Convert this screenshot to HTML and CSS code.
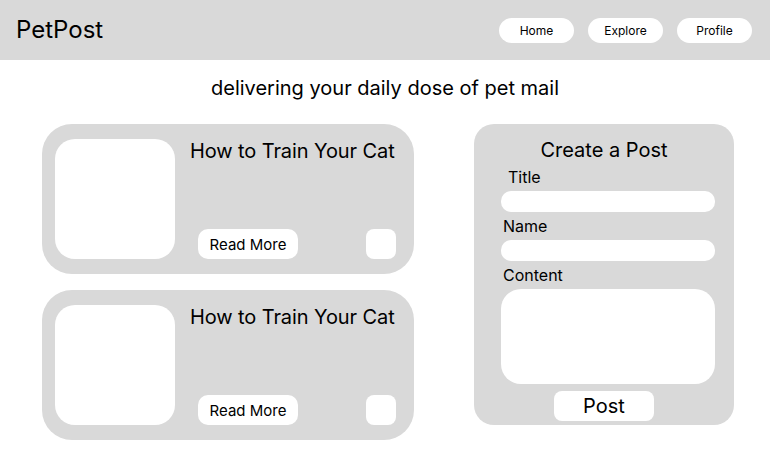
FILE: index.html
```html
<!DOCTYPE html>
<html>
  <head>
    <title>PetPost</title>
    <link rel="stylesheet" href="styles.css">
  </head>
  <body>
    <!-- Barra superior -->
    <header class="topbar">
      <h1 class="logo">PetPost</h1>
      <nav class="nav">
        <button class="nav-btn">Home</button>
        <button class="nav-btn">Explore</button>
        <button class="nav-btn">Profile</button>
      </nav>
    </header>

    <p class="tagline">delivering your daily dose of pet mail</p>

    <main class="content">
      <!-- Lista de posts -->
      <section class="posts">
        <article class="post-card">
          <div class="post-image"></div>
          <div class="post-body">
            <h2 class="post-title">How to Train Your Cat</h2>
            <div class="post-actions">
              <button class="read-more">Read More</button>
              <button class="square-btn"></button>
            </div>
          </div>
        </article>
        <article class="post-card">
          <div class="post-image"></div>
          <div class="post-body">
            <h2 class="post-title">How to Train Your Cat</h2>
            <div class="post-actions">
              <button class="read-more">Read More</button>
              <button class="square-btn"></button>
            </div>
          </div>
        </article>
      </section>

      <!-- Formulario -->
      <form class="create-post">
        <h2 class="form-title">Create a Post</h2>
        <label class="field-label first">Title</label>
        <input class="field" type="text">
        <label class="field-label">Name</label>
        <input class="field" type="text">
        <label class="field-label">Content</label>
        <textarea class="field area"></textarea>
        <button type="submit" class="post-btn">Post</button>
      </form>
    </main>
  </body>
</html>
```

FILE: styles.css
```css
html {
  margin: 0;
  padding: 0;
}
body {
  font-family: Inter, "Noto Sans", sans-serif;
  margin: 0;
  padding: 0;
  color: #000;
  background: #fff;
}

.topbar {
  display: flex;
  align-items: center;
  justify-content: space-between;
  height: 60px;
  padding: 0 18px 0 16px;
  background-color: #d9d9d9;
  box-sizing: border-box;
}

.logo {
  margin: 0;
  font-size: 24px;
  font-weight: 400;
  line-height: 28px;
}

.nav {
  display: flex;
  gap: 14px;
  padding-top: 1px;
}

.nav-btn {
  width: 75px;
  height: 25px;
  border: none;
  border-radius: 13px;
  background-color: #fff;
  font-family: inherit;
  font-size: 12px;
  color: #000;
  padding: 0;
}

.tagline {
  margin: 16px 0 24px;
  text-align: center;
  font-size: 20px;
  line-height: 24px;
}

.content {
  display: flex;
  align-items: flex-start;
  gap: 60px;
  padding-left: 42px;
}

.posts {
  display: flex;
  flex-direction: column;
  gap: 16px;
}

.post-card {
  display: flex;
  width: 372px;
  height: 150px;
  padding: 15px 18px 15px 13px;
  box-sizing: border-box;
  border-radius: 30px;
  background-color: #d9d9d9;
}

.post-image {
  width: 120px;
  height: 120px;
  border-radius: 20px;
  background-color: #fff;
  flex-shrink: 0;
}

.post-body {
  flex: 1;
  display: flex;
  flex-direction: column;
  justify-content: space-between;
  margin-left: 15px;
}

.post-title {
  margin: 0;
  font-size: 20px;
  font-weight: 400;
  line-height: 24px;
  white-space: nowrap;
  letter-spacing: -0.1px;
}

.post-actions {
  display: flex;
  align-items: center;
  padding-left: 8px;
}

.read-more {
  width: 100px;
  height: 30px;
  border: none;
  border-radius: 10px;
  background-color: #fff;
  font-family: inherit;
  font-size: 15px;
  color: #000;
  padding: 0;
}

.square-btn {
  width: 30px;
  height: 30px;
  margin-left: auto;
  border: none;
  border-radius: 8px;
  background-color: #fff;
  padding: 0;
}

.create-post {
  display: flex;
  flex-direction: column;
  width: 260px;
  height: 301px;
  padding: 14px 19px 4px 27px;
  box-sizing: border-box;
  border-radius: 20px;
  background-color: #d9d9d9;
}

.form-title {
  margin: 0 0 6px -8px;
  text-align: center;
  font-size: 20px;
  font-weight: 400;
  line-height: 24px;
}

.field-label {
  font-size: 16px;
  line-height: 19px;
  margin: 0 0 4px 2px;
}

.field-label.first {
  margin-left: 7px;
}

.field {
  height: 21px;
  margin: 0 0 5px;
  border: none;
  border-radius: 10px;
  background-color: #fff;
  box-sizing: border-box;
  font-family: inherit;
  outline: none;
}

.field.area {
  height: 95px;
  margin-bottom: 7px;
  border-radius: 20px;
  resize: none;
}

.post-btn {
  align-self: center;
  width: 100px;
  height: 30px;
  margin-left: -8px;
  border: none;
  border-radius: 8px;
  background-color: #fff;
  font-family: inherit;
  font-size: 20px;
  color: #000;
  padding: 0;
}
```
